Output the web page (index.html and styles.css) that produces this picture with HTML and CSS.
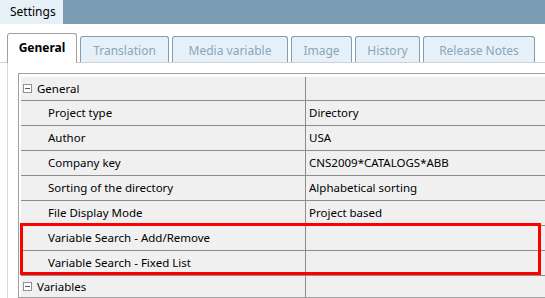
FILE: index.html
```html
<!DOCTYPE html>
<html lang="en">
<head>
    <meta charset="UTF-8">
    <title>Settings</title>
    <link rel="stylesheet" href="styles.css">
</head>
<body>
    <div class="titlebar">
        <div class="title-tab">Settings</div>
    </div>

    <div class="tabs">
        <div class="tab active">General</div>
        <div class="tab tab-translation">Translation</div>
        <div class="tab tab-media">Media variable</div>
        <div class="tab tab-image">Image</div>
        <div class="tab tab-history">History</div>
        <div class="tab tab-notes">Release Notes</div>
    </div>

    <div class="panel">
        <div class="grid">
            <div class="row group">
                <div class="name"><span class="toggle"></span>General</div>
                <div class="value"></div>
            </div>
            <div class="row">
                <div class="name">Project type</div>
                <div class="value">Directory</div>
            </div>
            <div class="row">
                <div class="name">Author</div>
                <div class="value">USA</div>
            </div>
            <div class="row">
                <div class="name">Company key</div>
                <div class="value">CNS2009*CATALOGS*ABB</div>
            </div>
            <div class="row">
                <div class="name">Sorting of the directory</div>
                <div class="value">Alphabetical sorting</div>
            </div>
            <div class="row">
                <div class="name">File Display Mode</div>
                <div class="value">Project based</div>
            </div>
            <div class="highlight">
                <div class="row">
                    <div class="name">Variable Search - Add/Remove</div>
                    <div class="value"></div>
                </div>
                <div class="row">
                    <div class="name">Variable Search - Fixed List</div>
                    <div class="value"></div>
                </div>
            </div>
            <div class="row group">
                <div class="name"><span class="toggle"></span>Variables</div>
                <div class="value"></div>
            </div>
        </div>
    </div>
</body>
</html>
```

FILE: styles.css
```css
body {
    margin: 0;
    padding: 0;
    font-family: "Noto Sans", "Open Sans", sans-serif;
    font-size: 11.5px;
    color: #000;
    background: #fff;
    overflow: hidden;
}

.titlebar {
    height: 24px;
    background-color: #7a9db3;
}

.title-tab {
    width: 53px;
    height: 24px;
    line-height: 24px;
    padding-left: 10px;
    background-color: #e6f0f7;
    font-size: 12px;
}

.tabs {
    display: flex;
    align-items: flex-end;
    margin-top: 9px;
    padding-left: 7px;
    height: 29px;
    border-bottom: 1px solid #d0d0d0;
}

.tab {
    box-sizing: border-box;
    height: 26px;
    line-height: 24px;
    padding-top: 2px;
    margin-right: 3px;
    text-align: center;
    font-size: 12px;
    color: #8ba6ba;
    background-color: #e5f0f8;
    border: 1px solid #7f9eb2;
    border-bottom: none;
    border-radius: 3px 3px 0 0;
}

.tab.active {
    width: 70px;
    height: 30px;
    line-height: 28px;
    padding-top: 0;
    margin-bottom: -1px;
    font-weight: bold;
    color: #000;
    background-color: #fff;
    border-color: #a0a0a0;
}

.tab-translation { width: 89px; }
.tab-media { width: 116px; }
.tab-image { width: 61px; }
.tab-history { width: 65px; }
.tab-notes { width: 112px; }

.panel {
    margin-left: 7px;
    padding: 10px 0 0 10px;
    border-left: 1px solid #d9d9d9;
    height: 235px;
}

.grid {
    width: 527px;
    border: 1px solid #a0a0a0;
    border-right: none;
    padding: 3px 0 0 2px;
    background: #fff;
}

.row {
    display: flex;
    height: 24px;
    line-height: 24px;
    background-color: #f0f0f0;
    border-bottom: 1px solid #8c8c8c;
}

.row.group {
    height: 23px;
    line-height: 23px;
}

.grid > .row:last-child {
    height: 21px;
    border-bottom: none;
}

.name {
    box-sizing: border-box;
    width: 285px;
    padding-left: 27px;
    border-right: 1px solid #8c8c8c;
    white-space: nowrap;
}

.group .name {
    display: flex;
    align-items: center;
    padding-left: 2px;
}

.value {
    flex: 1;
    padding-left: 3px;
    white-space: nowrap;
}

.toggle {
    position: relative;
    box-sizing: border-box;
    width: 9px;
    height: 9px;
    margin-right: 5px;
    border: 1px solid #919191;
    background: #fff;
}

.toggle::after {
    content: "";
    position: absolute;
    left: 1px;
    top: 3px;
    width: 5px;
    height: 1px;
    background: #555;
}

.highlight {
    position: relative;
}

.highlight::after {
    content: "";
    position: absolute;
    left: -1px;
    top: -3px;
    width: 515px;
    height: 46px;
    border: 3px solid #ff0000;
}
```
